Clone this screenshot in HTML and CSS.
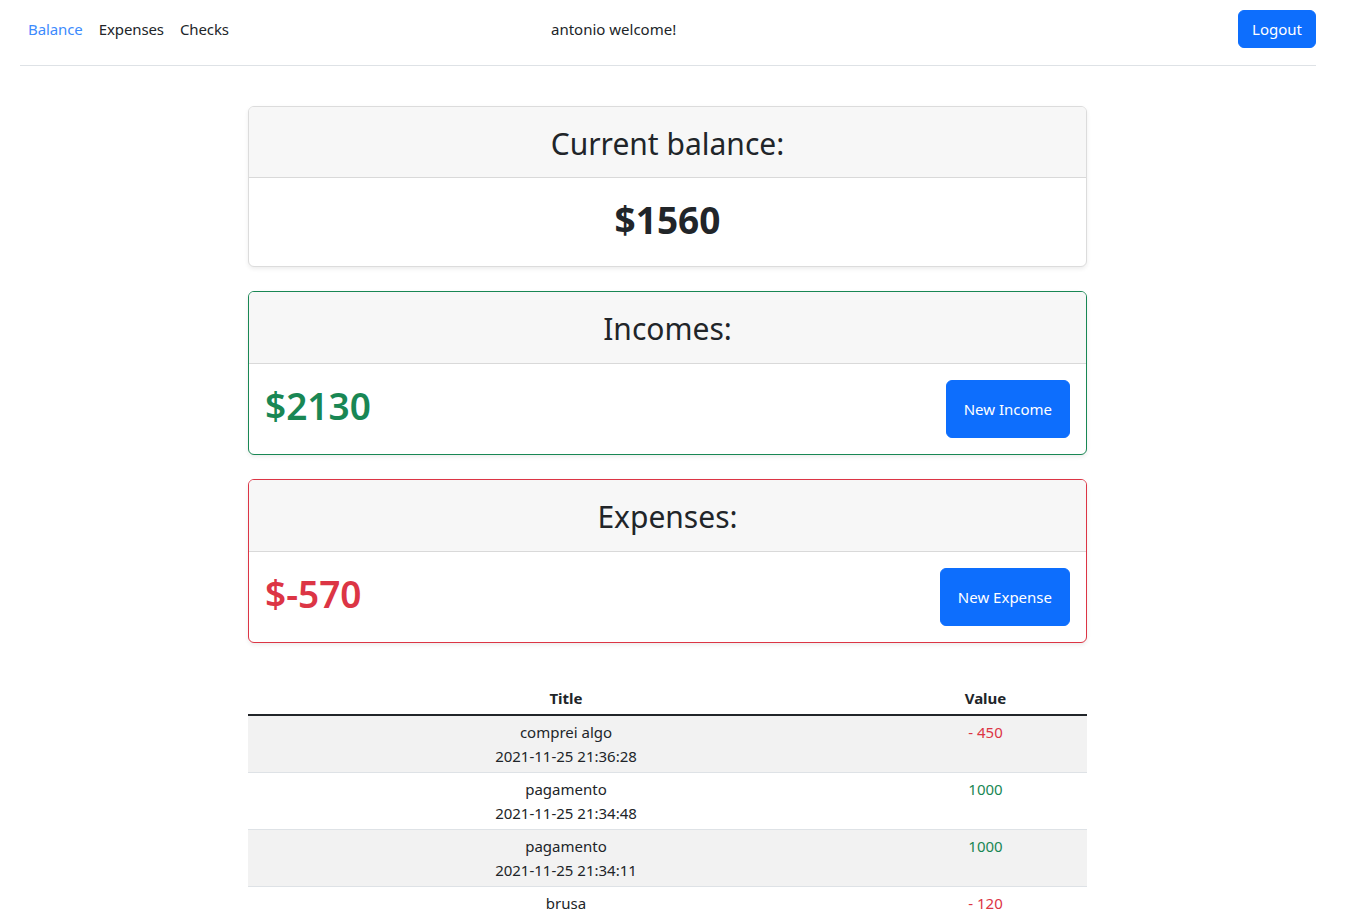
FILE: index.html
```html
<!DOCTYPE html>
<html lang="en">
<head>
<meta charset="utf-8">
<title>Balance</title>
<link rel="stylesheet" href="styles.css">
</head>
<body>
<div class="page">
  <nav class="topbar">
    <ul class="nav-links">
      <li><a class="nav-link active" href="#">Balance</a></li>
      <li><a class="nav-link" href="#">Expenses</a></li>
      <li><a class="nav-link" href="#">Checks</a></li>
    </ul>
    <div class="welcome">antonio welcome!</div>
    <button class="btn btn-logout">Logout</button>
  </nav>

  <main class="content">
    <section class="card">
      <div class="card-header card-header-main">Current balance:</div>
      <div class="card-body card-body-center">
        <span class="amount amount-total">$1560</span>
      </div>
    </section>

    <section class="card card-success">
      <div class="card-header">Incomes:</div>
      <div class="card-body card-body-split">
        <span class="amount text-success">$2130</span>
        <button class="btn btn-big">New Income</button>
      </div>
    </section>

    <section class="card card-danger">
      <div class="card-header">Expenses:</div>
      <div class="card-body card-body-split">
        <span class="amount text-danger">$-570</span>
        <button class="btn btn-big">New Expense</button>
      </div>
    </section>

    <table class="table">
      <thead>
        <tr><th class="col-title">Title</th><th>Value</th></tr>
      </thead>
      <tbody>
        <tr><td>comprei algo<br>2021-11-25 21:36:28</td><td class="text-danger">- 450</td></tr>
        <tr><td>pagamento<br>2021-11-25 21:34:48</td><td class="text-success">1000</td></tr>
        <tr><td>pagamento<br>2021-11-25 21:34:11</td><td class="text-success">1000</td></tr>
        <tr><td>brusa<br>2021-11-25 21:33:02</td><td class="text-danger">- 120</td></tr>
      </tbody>
    </table>
  </main>
</div>
</body>
</html>
```

FILE: styles.css
```css
* { box-sizing: border-box; }

body {
  margin: 0;
  font-family: "Noto Sans", "Open Sans", sans-serif;
  font-size: 15px;
  line-height: 24px;
  color: #212529;
  background: #fff;
}

.page {
  width: 1335px;
}

.topbar {
  display: flex;
  align-items: center;
  margin: 0 19px 0 20px;
  padding: 10px 0 17px;
  border-bottom: 1px solid #dee2e6;
}

.nav-links {
  display: flex;
  width: 215px;
  list-style: none;
  margin: 0;
  padding: 0;
}

.nav-link {
  display: block;
  padding: 7px 8px;
  color: #212529;
  text-decoration: none;
  letter-spacing: -0.1px;
}

.nav-link.active {
  color: #3d8bfd;
}

.welcome {
  flex: 1;
  padding-left: 316px;
}

.btn {
  font-family: inherit;
  font-size: 15px;
  line-height: 24px;
  color: #fff;
  background: #0d6efd;
  border: 1px solid #0d6efd;
  border-radius: 6px;
  cursor: pointer;
}

.btn-logout {
  padding: 6px 13px;
}

.btn-big {
  padding: 16px 17px;
}

.content {
  width: 839px;
  margin: 40px auto 0;
}

.card {
  border: 1px solid #dcdcdc;
  border-radius: 6px;
  box-shadow: 0 2px 4px rgba(0, 0, 0, 0.075);
  margin-bottom: 24px;
  overflow: hidden;
  background: #fff;
}

.card-success { border-color: #198754; }
.card-danger { border-color: #dc3545; }

.card-header {
  height: 72px;
  padding-top: 3px;
  display: flex;
  align-items: center;
  justify-content: center;
  background: #f7f7f7;
  border-bottom: 1px solid #d9d9d9;
  font-size: 30px;
  line-height: 1.2;
}

.card-header-main {
  height: 71px;
}

.card-body {
  padding: 16px;
}

.card-body-center {
  height: 88px;
  display: flex;
  align-items: center;
  justify-content: center;
}

.card-body-split {
  display: flex;
  align-items: center;
  justify-content: space-between;
}

.amount {
  font-size: 37px;
  line-height: 1.2;
  font-weight: 600;
}

.card-body-split .amount {
  padding-bottom: 5px;
}

.amount-total {
  font-weight: 700;
  padding-bottom: 4px;
}

.text-success { color: #198754; }
.text-danger { color: #dc3545; }

.table {
  width: 100%;
  margin-top: 39px;
  border-collapse: collapse;
  text-align: center;
}

.table th {
  padding: 4px;
  font-weight: 700;
  border-bottom: 2px solid #212529;
}

.table .col-title {
  width: 636px;
}

.table td {
  padding: 4px;
  vertical-align: top;
  border-bottom: 1px solid #dee2e6;
}

.table tbody tr:nth-child(odd) td {
  background: #f2f2f2;
}
```
